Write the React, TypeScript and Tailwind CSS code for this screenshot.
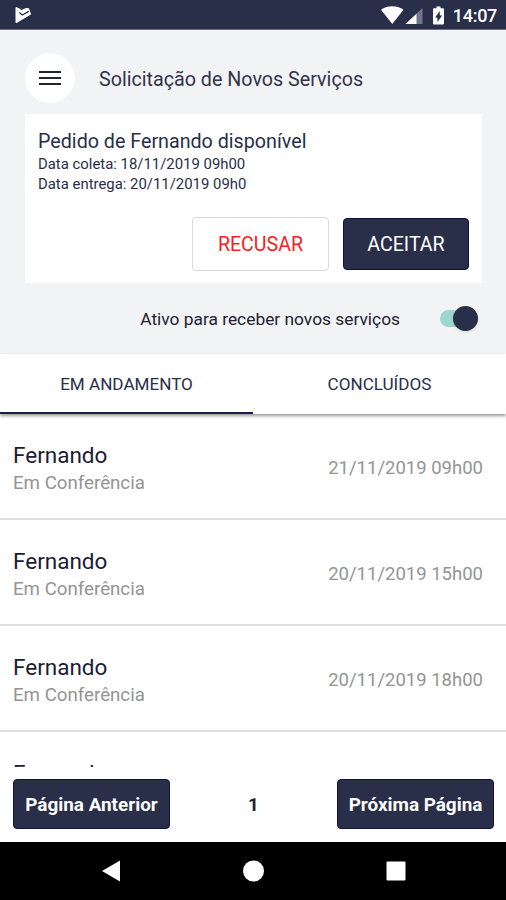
import { useState } from "react";

const services = [
  { id: 1, name: "Fernando", status: "Em Conferência", date: "21/11/2019 09h00" },
  { id: 2, name: "Fernando", status: "Em Conferência", date: "20/11/2019 15h00" },
  { id: 3, name: "Fernando", status: "Em Conferência", date: "20/11/2019 18h00" },
  { id: 4, name: "Fernando", status: "", date: "" },
];

function StatusBar() {
  return (
    <div className="flex h-[30px] shrink-0 items-center justify-between border-b border-[#6d6c80] bg-[#292e49] pr-[9px] pl-3.5 text-white">
      <svg width="18" height="18" viewBox="0 0 18 18">
        <path
          d="M2 1.500L6 3.200L14.500 2.500L16.600 8.200L2 16.800z"
          fill="#fff"
          stroke="#fff"
          strokeWidth="1"
          strokeLinejoin="round"
        />
        <path d="M5 .5l2.500 3 4.500-2.500M5.300 6.500L8.300 9l6.500-3.600" fill="none" stroke="#292e49" strokeWidth="1.300" />
      </svg>
      <div className="flex items-center">
        <svg width="67" height="20" viewBox="-1 0 67 20">
          <path d="M-1 4.800C5.500 .2 14.800 .2 21.500 4.800L10.300 19z" fill="#fff" />
          <path d="M40.500 3v16H23.500z" fill="#737689" />
          <path d="M34.500 8.700V19H23.500z" fill="#fff" />
          <path d="M54.500 1.500h4v1.800h2.500q1 0 1 1V18.300q0 1.200-1.200 1.200h-8.600q-1.200 0-1.200-1.200V4.300q0-1 1-1h2.500z" fill="#fff" />
          <path d="M57.800 6v4.500h2.400l-4.800 6.500v-4.600h-2.300z" fill="#292e49" />
        </svg>
        <span className="mt-0.5 ml-[5px] text-[18px] leading-5 font-medium tracking-[-0.3px]">14:07</span>
      </div>
    </div>
  );
}

function RequestCard() {
  return (
    <div className="mx-6 mt-[11px] ml-[25px] h-[169px] bg-white px-[13px] pt-4 text-[#292e49]">
      <h2 className="text-[19.700px] leading-6">Pedido de Fernando disponível</h2>
      <p className="text-[14.900px] leading-5">Data coleta: 18/11/2019 09h00</p>
      <p className="text-[14.900px] leading-5">Data entrega: 20/11/2019 09h0</p>
      <div className="mt-[23px] flex justify-end gap-3.5 text-[19.600px]">
        <button className="h-[54px] w-[137px] rounded border border-[#d9d9dd] pt-px text-[#f81d22]">
          RECUSAR
        </button>
        <button className="mt-px h-[52px] w-[126px] rounded border border-[#11123a] bg-[#292e49] pt-px text-white">
          ACEITAR
        </button>
      </div>
    </div>
  );
}

export default function App() {
  const [active, setActive] = useState(true);
  const [page, setPage] = useState(1);

  return (
    <div className="flex h-[900px] w-[506px] flex-col overflow-hidden bg-white font-['Roboto',sans-serif] text-[#1c1c34]">
      <StatusBar />

      {/* Cabeçalho */}
      <header className="h-[324px] shrink-0 bg-[#f2f3f5] pt-[23px]">
        <div className="flex items-center pl-[25px]">
          <button className="flex size-[50px] items-center justify-center rounded-full bg-white">
            <svg width="22" height="16" viewBox="0 0 22 16" stroke="#222230" strokeWidth="2">
              <path d="M0 2h22M0 8h22M0 14h22" />
            </svg>
          </button>
          <h1 className="ml-6 pt-[3px] text-[19.700px] text-[#33344a]">Solicitação de Novos Serviços</h1>
        </div>

        <RequestCard />

        <div className="mt-[22px] flex items-center justify-end pr-7">
          <span className="pt-px text-[17.350px] leading-[26px] text-[#222230]">
            Ativo para receber novos serviços
          </span>
          <button
            onClick={() => setActive(!active)}
            className="ml-10 flex h-[17px] w-[38px] items-center justify-end rounded-full bg-[#9bd8cb]"
          >
            <span className="size-[25px] shrink-0 rounded-full bg-[#292e49] shadow" />
          </button>
        </div>
      </header>

      {/* Abas */}
      <nav className="z-10 flex h-[60px] shrink-0 bg-white text-[17.100px] text-[#292e49] shadow-[0_2px_3px_rgba(0,0,0,0.4)]">
        <button className="w-1/2 border-b-2 border-[#1b1b45] pt-1">EM ANDAMENTO</button>
        <button className="w-1/2 border-b-2 border-transparent pt-1">CONCLUÍDOS</button>
      </nav>

      {/* Serviços */}
      <main className="h-[353px] shrink-0 overflow-hidden">
        {services.map(({ id, name, status, date }) => (
          <div
            key={id}
            className="flex h-[106px] justify-between border-b-2 border-[#dedede] pt-[26px] pr-[23px] pl-[13px]"
          >
            <div>
              <p className="text-[22.500px] leading-[30px]">{name}</p>
              <p className="text-[18.700px] leading-[26px] text-[#949494]">{status}</p>
            </div>
            <p className="pt-[15px] text-[18.500px] leading-[26px] text-[#949494]">{date}</p>
          </div>
        ))}
      </main>

      {/* Paginação */}
      <footer className="flex h-[75px] shrink-0 items-start justify-between pt-3 pr-3 pl-[13px] text-[18.900px] font-bold">
        <button
          onClick={() => setPage(Math.max(1, page - 1))}
          className="h-[50px] w-[157px] rounded border border-[#11123a] bg-[#292e49] pt-0.5 text-white"
        >
          Página Anterior
        </button>
        <span className="pt-px leading-[50px] text-[#222222]">{page}</span>
        <button
          onClick={() => setPage(page + 1)}
          className="h-[50px] w-[157px] rounded border border-[#11123a] bg-[#292e49] pt-0.5 text-white"
        >
          Próxima Página
        </button>
      </footer>

      {/* Navegação do sistema */}
      <div className="flex h-[58px] items-center justify-center bg-black">
        <svg width="310" height="24" viewBox="0 0 310 24" fill="#fff">
          <path d="M4 12L22 1.500v21z" />
          <circle cx="155.500" cy="12" r="10.500" />
          <rect x="288.500" y="2.500" width="19" height="19" rx="1" />
        </svg>
      </div>
    </div>
  );
}
